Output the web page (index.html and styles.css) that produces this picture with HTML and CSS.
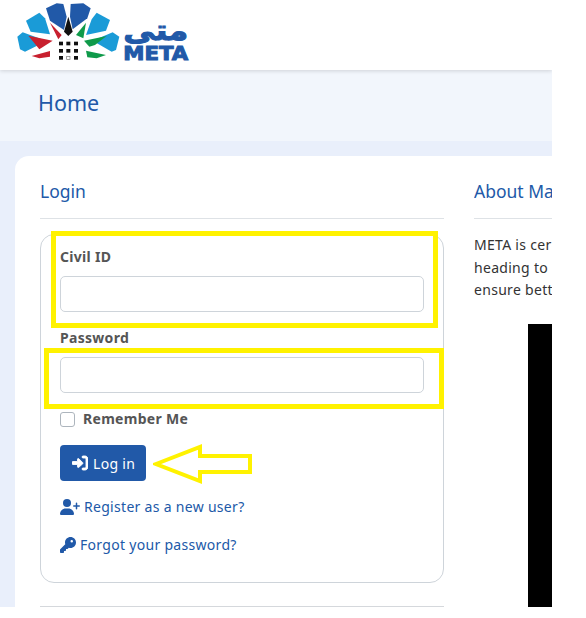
FILE: index.html
```html
<!DOCTYPE html>
<html lang="en">
<head>
    <meta charset="UTF-8">
    <meta name="viewport" content="width=device-width, initial-scale=1.0">
    <title>META Login</title>
    <link rel="stylesheet" href="styles.css">
</head>
<body>

    <div class="page">
        <header class="topbar">
            <svg class="logo" viewBox="0 0 600 210" width="200" height="70">
                <g fill="#1a9bd7">
                    <polygon points="78,62 118,38 135,55 150,103 92,95"/>
                    <polygon points="275,58 290,38 330,60 318,92 258,105"/>
                    <polygon points="52,110 68,97 140,123 75,155 60,148"/>
                    <polygon points="278,122 338,97 358,110 348,150 335,155"/>
                </g>
                <g fill="#2159a8">
                    <polygon points="138,25 170,10 190,12 200,50 192,90 150,62"/>
                    <polygon points="212,12 250,10 272,25 262,55 218,88 210,50"/>
                </g>
                <g fill="#c8202f">
                    <polygon points="150,68 185,105 175,118"/>
                    <polygon points="85,107 158,122 118,148"/>
                    <polygon points="95,168 150,153 150,170 118,175"/>
                </g>
                <g fill="#0f9a4a">
                    <polygon points="258,68 250,115 228,105"/>
                    <polygon points="252,122 320,108 285,135 268,140"/>
                    <polygon points="258,152 318,165 290,175 262,172"/>
                </g>
                <polygon points="205,50 218,95 205,108 192,95" fill="#111"/>
                <g fill="#111">
                    <rect x="177" y="125" width="12" height="11"/>
                    <rect x="199" y="125" width="12" height="11"/>
                    <rect x="222" y="125" width="12" height="11"/>
                    <rect x="177" y="147" width="12" height="11"/>
                    <rect x="199" y="147" width="12" height="11"/>
                    <rect x="222" y="147" width="12" height="11"/>
                    <rect x="177" y="168" width="12" height="11"/>
                    <rect x="222" y="168" width="12" height="11"/>
                </g>
                <rect x="200" y="169" width="10" height="9" fill="none" stroke="#777" stroke-width="2"/>
                <text class="logo-ar" x="370" y="120" textLength="195" lengthAdjust="spacingAndGlyphs">متى</text>
                <text class="logo-en" x="370" y="180" textLength="195" lengthAdjust="spacingAndGlyphs">META</text>
            </svg>
        </header>

        <div class="titlebar">
            <h1>Home</h1>
        </div>

        <main class="content">
            <div class="card">
                <section class="col-login">
                    <h2 class="col-title">Login</h2>
                    <form class="login-box">
                        <label class="field-label" for="civilId">Civil ID</label>
                        <input class="field-input" type="text" id="civilId">
                        <label class="field-label" for="password">Password</label>
                        <input class="field-input" type="password" id="password">
                        <label class="remember">
                            <span class="check"></span>
                            Remember Me
                        </label>
                        <button class="btn-login" type="button">
                            <svg class="icon" viewBox="0 0 512 512" width="16" height="16" fill="#fff" stroke="#fff" stroke-width="28">
                                <path d="M352 96h64c18 0 32 14 32 32v256c0 18-14 32-32 32h-64c-18 0-32 14-32 32s14 32 32 32h64c53 0 96-43 96-96V128c0-53-43-96-96-96h-64c-18 0-32 14-32 32s14 32 32 32z"/>
                                <path d="M345 279c9-9 9-24 0-33L217 118c-7-7-17-9-26-5s-15 12-15 22v73H32c-18 0-32 14-32 32v32c0 18 14 32 32 32h144v73c0 10 6 18 15 22s19 2 26-5z"/>
                            </svg>
                            Log in
                        </button>
                        <a class="link" href="#">
                            <svg class="icon" viewBox="0 0 640 512" width="20" height="16" fill="#2159a8">
                                <circle cx="224" cy="128" r="128"/>
                                <path d="M178 304h92c99 0 178 80 178 178 0 17-13 30-30 30H30c-17 0-30-13-30-30 0-98 80-178 178-178z"/>
                                <path d="M504 312v-64h-64c-13 0-24-11-24-24s11-24 24-24h64v-64c0-13 11-24 24-24s24 11 24 24v64h64c13 0 24 11 24 24s-11 24-24 24h-64v64c0 13-11 24-24 24s-24-11-24-24z"/>
                            </svg>
                            Register as a new user?
                        </a>
                        <a class="link" href="#">
                            <svg class="icon" viewBox="0 0 512 512" width="16" height="16" fill="#2159a8">
                                <path fill-rule="evenodd" d="M336 352c97 0 176-79 176-176S433 0 336 0 160 79 160 176c0 19 3 37 8 54L7 391c-4 4-7 10-7 17v80c0 13 11 24 24 24h80c13 0 24-11 24-24v-40h40c13 0 24-11 24-24v-40h40c6 0 12-3 17-7l33-33c17 5 35 8 54 8zM376 96a40 40 0 1 1 0 80 40 40 0 1 1 0-80z"/>
                            </svg>
                            Forgot your password?
                        </a>
                    </form>
                    <hr class="rule">
                </section>
                <section class="col-about">
                    <h2 class="col-title">About Ma</h2>
                    <p class="about-text">META is cer<br>heading to<br>ensure bett</p>
                    <div class="video"></div>
                </section>
            </div>
        </main>

        <!-- yellow marks drawn over the screenshot -->
        <div class="mark mark-civil"></div>
        <div class="mark mark-pass"></div>
        <svg class="mark-arrow" viewBox="0 0 100 40" width="100" height="40">
            <polygon points="3,20 47,3 47,12 97,12 97,28 47,28 47,37" fill="none" stroke="#fff200" stroke-width="4"/>
        </svg>
    </div>

</body>
</html>
```

FILE: styles.css
```css
body {
    margin: 0;
    background: #fff;
    font-family: "Noto Sans", sans-serif;
    font-size: 14px;
    letter-spacing: 0.3px;
    color: #333;
}
.page {
    position: relative;
    width: 552px;
    height: 607px;
    overflow: hidden;
    background: #e9effb;
}
.topbar {
    position: relative;
    height: 70px;
    background: #fff;
    box-shadow: 0 1px 4px rgba(0, 0, 0, 0.15);
}
.logo { display: block; }
.logo-ar {
    font-family: "DejaVu Sans", sans-serif;
    font-weight: bold;
    font-size: 84px;
    letter-spacing: 0;
    fill: #2159a8;
    stroke: #2159a8;
    stroke-width: 3px;
}
.logo-en {
    font-family: "DejaVu Sans", sans-serif;
    font-weight: bold;
    font-size: 58px;
    letter-spacing: 0;
    fill: #2159a8;
    stroke: #2159a8;
    stroke-width: 3px;
}
.titlebar {
    height: 65px;
    padding: 0 0 6px 38px;
    background: #f2f6fc;
    display: flex;
    align-items: center;
}
.titlebar h1 {
    margin: 0;
    font-size: 21.5px;
    font-weight: 400;
    letter-spacing: 0;
    color: #2159a8;
}
.content { padding: 15px 0 0 15px; }
.card {
    display: flex;
    gap: 30px;
    height: 460px;
    padding: 0 0 0 25px;
    background: #fff;
    border-radius: 14px 0 0 0;
}
.col-login { flex: 0 0 404px; }
.col-about {
    flex: 1;
    min-width: 0;
    overflow: hidden;
    white-space: nowrap;
}
.col-title {
    margin: 0;
    height: 63px;
    box-sizing: border-box;
    padding-top: 22px;
    font-size: 17.5px;
    font-weight: 400;
    line-height: 26px;
    letter-spacing: 0;
    color: #2159a8;
    border-bottom: 1px solid #dee2e6;
}
.login-box {
    display: flex;
    flex-direction: column;
    align-items: flex-start;
    box-sizing: border-box;
    height: 349px;
    margin-top: 15px;
    padding: 12px 19px 0;
    border: 1px solid #ced4da;
    border-radius: 14px;
}
.field-label {
    font-weight: 700;
    line-height: 20px;
    color: #555;
    margin-bottom: 9px;
}
.field-input {
    display: block;
    width: 100%;
    height: 36px;
    box-sizing: border-box;
    margin-bottom: 16px;
    border: 1px solid #ced4da;
    border-radius: 5px;
    background: #fff;
}
.remember {
    display: flex;
    align-items: center;
    gap: 8px;
    font-weight: 700;
    line-height: 20px;
    color: #555;
    margin: 0 0 16px;
}
.check {
    width: 13px;
    height: 13px;
    border: 1px solid #adb5bd;
    border-radius: 3px;
}
.btn-login {
    display: flex;
    align-items: center;
    gap: 5px;
    width: 86px;
    height: 36px;
    padding: 0 0 0 12px;
    border: none;
    border-radius: 4px;
    background: #2159a8;
    color: #fff;
    font-family: inherit;
    font-size: 14px;
    letter-spacing: 0.3px;
    white-space: nowrap;
}
.link {
    display: flex;
    align-items: center;
    gap: 4px;
    margin-top: 16px;
    line-height: 22px;
    color: #2159a8;
    text-decoration: none;
}
.btn-login + .link { margin-top: 15px; }
.rule {
    margin: 23px 0 0;
    border: none;
    border-top: 1px solid #d5d8dc;
}
.about-text {
    margin: 15px 0 22px;
    line-height: 22.5px;
    color: #333;
}
.video {
    margin-left: 54px;
    height: 300px;
    background: #000;
}
.mark {
    position: absolute;
    box-sizing: border-box;
    border: 5px solid #fff200;
}
.mark-civil {
    left: 51px;
    top: 231px;
    width: 387px;
    height: 97px;
}
.mark-pass {
    left: 44px;
    top: 348px;
    width: 400px;
    height: 61px;
}
.mark-arrow {
    position: absolute;
    left: 153px;
    top: 444px;
}
```
